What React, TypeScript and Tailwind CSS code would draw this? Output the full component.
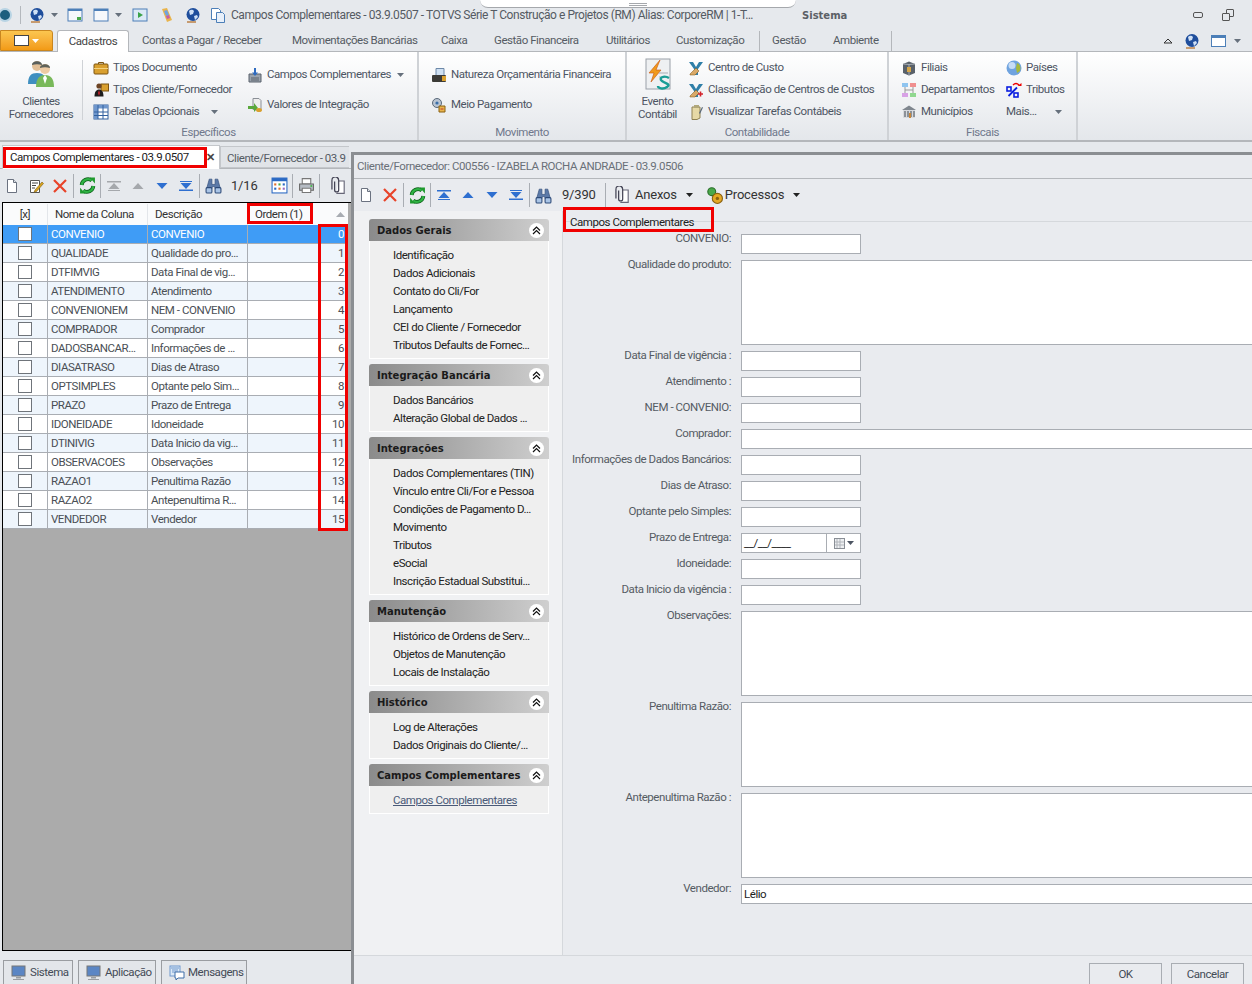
import type { ReactNode } from 'react'

const Svg = ({ s = 16, children }: { s?: number; children: ReactNode }) => (
  <svg width={s} height={s} viewBox="0 0 16 16" className="shrink-0">
    {children}
  </svg>
)

/* toolbar icons */
const DocIcon = () => (
  <Svg>
    <path d="M3.5 1.5h6l3 3v10h-9z" fill="#fff" stroke="#6b7280" />
    <path d="M9.5 1.5v3h3" fill="#dfe3e8" stroke="#6b7280" />
  </Svg>
)
const EditIcon = () => (
  <Svg>
    <path d="M2.5 2.5h9v12h-9z" fill="#fff" stroke="#555" />
    <path d="M4 5h6M4 7.5h4M4 10h3" stroke="#444" />
    <path d="M7 12l7-8 1.5 1.5-7 8-2.5 .8z" fill="#d9a520" stroke="#7c5a10" strokeWidth=".6" />
  </Svg>
)
const XIcon = () => (
  <Svg>
    <path d="M2 2l12 12M14 2L2 14" stroke="#e8442a" strokeWidth="2.2" />
  </Svg>
)
const RefreshIcon = () => (
  <Svg s={17}>
    <path d="M2.5 7.5A6 6 0 0 1 12 3.2" fill="none" stroke="#0b5d17" strokeWidth="3.6" />
    <path d="M13.5 8.5A6 6 0 0 1 4 12.8" fill="none" stroke="#0b5d17" strokeWidth="3.6" />
    <path d="M2.5 7.5A6 6 0 0 1 12 3.2" fill="none" stroke="#2fb344" strokeWidth="2.2" />
    <path d="M13.5 8.5A6 6 0 0 1 4 12.8" fill="none" stroke="#2fb344" strokeWidth="2.2" />
    <path d="M10 0.5h5v5.5z" fill="#1f9a2e" />
    <path d="M6 15.5H1V10z" fill="#1f9a2e" />
  </Svg>
)
const Nav = ({ d, c, bar }: { d: 'up' | 'down'; c: string; bar?: boolean }) => (
  <Svg>
    {d === 'up' ? (
      <>
        {bar && <path d="M1 3h14v1.6H1zM2 12h12v1H2z" fill={c} />}
        <path d="M8 5l5.5 6h-11z" fill={c} />
      </>
    ) : (
      <>
        {bar && <path d="M1 11.5h14V13H1zM2 3h12v1H2z" fill={c} />}
        <path d="M8 11L2.5 5h11z" fill={c} />
      </>
    )}
  </Svg>
)
const Binoculars = () => (
  <Svg s={17}>
    <path d="M4 2h2.5v5h3V2H12l2.5 9h-5L9 9H7l-.5 2h-5z" fill="#5c7aa8" stroke="#2d4a78" strokeWidth=".6" />
    <rect x="1" y="10" width="5.5" height="5" rx="1" fill="#a9c4e6" stroke="#2d4a78" />
    <rect x="9.5" y="10" width="5.5" height="5" rx="1" fill="#a9c4e6" stroke="#2d4a78" />
  </Svg>
)
const GridIcon = () => (
  <Svg s={17}>
    <rect x="1" y="1" width="14" height="14" fill="#fff" stroke="#2a69c4" />
    <path d="M1 1h14v3H1z" fill="#2a69c4" />
    <path d="M3 6h2v2H3z" fill="#e0702c" />
    <path d="M7 6h2v2H7z" fill="#4aa84a" />
    <path d="M11 6h2v2h-2z" fill="#2a69c4" />
    <path d="M3 10h2v2H3z" fill="#2a69c4" />
    <path d="M7 10h2v2H7z" fill="#e0702c" />
    <path d="M11 10h2v2h-2z" fill="#9a6ac0" />
  </Svg>
)
const PrinterIcon = () => (
  <Svg s={17}>
    <path d="M4 1.5h8v5H4z" fill="#fff" stroke="#777" />
    <path d="M1.5 6.5h13v6h-13z" fill="#b6bcc4" stroke="#666" />
    <path d="M4 10.5h8v4H4z" fill="#fff" stroke="#777" />
    <circle cx="12.5" cy="8.5" r="1" fill="#43b649" />
  </Svg>
)
const ClipIcon = () => (
  <Svg s={18}>
    <path d="M8.5 3.5h5v11h-7" fill="#fff" stroke="#667" />
    <path d="M5 4v7.5a1.8 1.8 0 0 0 3.6 0V3a3 3 0 0 0-6 0v8" fill="none" stroke="#445" strokeWidth="1.1" />
  </Svg>
)
const CogsIcon = () => (
  <Svg s={18}>
    <circle cx="6" cy="5" r="3.5" fill="#4aa84a" stroke="#2a6e2a" />
    <circle cx="11" cy="11" r="4.5" fill="#e5a823" stroke="#8a6110" />
    <circle cx="11" cy="11" r="1.5" fill="#8a6110" />
  </Svg>
)

/* ribbon icons */
const Briefcase = () => (
  <Svg>
    <path d="M5.5 4V2.5h5V4" fill="none" stroke="#7c5512" />
    <rect x="1" y="4" width="14" height="10" rx="1" fill="#d9a02f" stroke="#7c5512" />
    <path d="M1 8.5h14" stroke="#f4d27e" />
  </Svg>
)
const PersonCase = () => (
  <Svg>
    <rect x="8" y="2" width="7.5" height="7" fill="#d9a02f" stroke="#7c5512" />
    <circle cx="6" cy="4" r="2.6" fill="#6d4424" />
    <path d="M1.5 14.5c0-5 2-7 4.5-7s4.5 2 4.5 7z" fill="#1c1c1c" />
    <path d="M6 8l-1 3 1 3 1-3z" fill="#c8232c" />
  </Svg>
)
const TableIcon = () => (
  <Svg>
    <rect x="1" y="1" width="14" height="14" fill="#fff" stroke="#32609e" />
    <path d="M1 1h14v3.5H1zM1 4.5h4v10.5H1z" fill="#6f97cd" />
    <path d="M1 8h14M1 11.5h14M5 1v14M10 1v14" stroke="#32609e" />
  </Svg>
)
const Campos = () => (
  <Svg>
    <path d="M2 7h12v8H2z" fill="#9aa3ad" stroke="#5a626c" />
    <path d="M8 1v7" stroke="#2e6bc0" strokeWidth="2" />
    <path d="M5 5.5h6L8 9z" fill="#2e6bc0" />
    <path d="M4 11h8M4 13h8" stroke="#5a626c" />
  </Svg>
)
const Valores = () => (
  <Svg>
    <path d="M6 1.5h6l2 2v9H6z" fill="#eee" stroke="#8a8f96" />
    <path d="M1 9h6V6l4 5-4 4v-3H1z" fill="#5aa83c" />
    <ellipse cx="12" cy="13" rx="3" ry="2" fill="#d9a02f" />
  </Svg>
)
const Natureza = () => (
  <Svg>
    <path d="M5 1.5h8v7H5z" fill="#cfe0f2" stroke="#6d88a8" />
    <rect x="1" y="8" width="14" height="7" rx="1" fill="#3b3a36" />
    <rect x="11" y="9" width="4" height="5" fill="#d9a02f" />
  </Svg>
)
const Meio = () => (
  <Svg>
    <circle cx="6" cy="6" r="4.5" fill="#b9c4d2" stroke="#5a6878" />
    <circle cx="6" cy="6" r="1.6" fill="#3a6ea8" />
    <path d="M8 9h6v6H8z" fill="#e9b44c" stroke="#8a6110" />
    <path d="M9.5 12h3" stroke="#c0392b" />
  </Svg>
)
const Centro = ({ red }: { red?: boolean }) => (
  <Svg>
    <path d="M1 2h4l3 5 3-5h4l-5 7v6H6V9z" fill="#2f7fa8" />
    <path d="M2 14l6-6 3 3-4 4H2z" fill="#d9a968" stroke="#7c5512" strokeWidth=".5" />
    {red && <path d="M10 12h5M12.5 9.5v5" stroke="#d3222a" strokeWidth="1.6" />}
  </Svg>
)
const Tarefas = () => (
  <Svg>
    <path d="M4 3h8v11l-3 1.5H4z" fill="#e6d9a6" stroke="#8f8152" />
    <path d="M6 1h5v3H6z" fill="#b0a77a" />
    <path d="M11 9l3-6 1 .6-3 6.4z" fill="#5a6878" />
  </Svg>
)
const Filiais = () => (
  <Svg>
    <path d="M2 4l6-2.5L14 4v9l-6 2.5L2 13z" fill="#59616a" />
    <path d="M8 4.5l-6-.5M8 4.5L14 4M8 4.5v11" stroke="#a8aeb5" />
    <rect x="6" y="7" width="4" height="5" fill="#d5a64a" />
  </Svg>
)
const Dept = () => (
  <Svg>
    <rect x="1" y="1" width="6" height="4" fill="#8fc5f0" />
    <rect x="9" y="1" width="6" height="4" fill="#f08f8f" />
    <rect x="1" y="11" width="6" height="4" fill="#d8a2e6" />
    <rect x="9" y="11" width="6" height="4" fill="#90d890" />
    <path d="M4 5v6M12 5v6M4 8h8" stroke="#999" />
  </Svg>
)
const Municipio = () => (
  <Svg>
    <path d="M1 6l7-4.5L15 6z" fill="#7f868e" />
    <path d="M2 6h12v8H2z" fill="#d8dade" />
    <path d="M4 7v6M7 7v6M10 7v6M13 7v6" stroke="#6d747c" strokeWidth="1.4" />
    <path d="M8 9h2v5H8z" fill="#c8873a" />
  </Svg>
)
const Globe = () => (
  <Svg>
    <circle cx="8" cy="8" r="7.5" fill="#6fa3df" />
    <circle cx="6" cy="5.5" r="3.5" fill="#c6dcf5" />
    <path d="M11 3c3 1 4 4 3 8l-3 2-1-5z" fill="#a6b83c" />
  </Svg>
)
const Percent = () => (
  <Svg>
    <path d="M2.5 14L11 5.5" stroke="#0a1fe0" strokeWidth="1.8" />
    <rect x="1" y="5" width="4" height="4" fill="none" stroke="#0a1fe0" strokeWidth="1.6" />
    <rect x="8" y="11" width="4" height="4" fill="none" stroke="#0a1fe0" strokeWidth="1.6" />
    <path d="M7 3c2-2 4-2 6 0" fill="none" stroke="#e00" strokeWidth="1.4" />
    <path d="M11.5 4h4V1z" fill="#e00" />
  </Svg>
)
const Net = ({ s = 16 }: { s?: number }) => (
  <Svg s={s}>
    <circle cx="8" cy="7.5" r="6.5" fill="#1f4e9c" />
    <path d="M4 4c2-2 4-1 5 0l-1 3-3 1zM9 9l3-1 1 2-3 3z" fill="#cfe0f5" />
    <path d="M2 15h9" stroke="#b87a3a" strokeWidth="1.4" />
  </Svg>
)
const Caret = ({ c = '#66707c' }: { c?: string }) => (
  <svg width="7" height="4" viewBox="0 0 7 4" className="shrink-0">
    <path d="M0 0h7L3.5 4z" fill={c} />
  </svg>
)
const People = () => (
  <svg width="30" height="30" viewBox="0 0 30 30">
    <circle cx="11" cy="8" r="5" fill="#e2bf97" />
    <path d="M6 7c0-5 10-5 10 0-3-1-7-1-10 0z" fill="#595f5c" />
    <path d="M2 26c0-8 3-11 9-11s9 3 9 11z" fill="#3f8fc0" />
    <circle cx="19" cy="11" r="5" fill="#eecba4" />
    <path d="M14 10c0-5 10-5 10 0-3-1-7-1-10 0z" fill="#5f625a" />
    <path d="M10 29c0-8 3-12 9-12s9 4 9 12z" fill="#79b95a" />
    <path d="M19 17l-2 3 2 6 2-6z" fill="#fff" />
  </svg>
)
const Evento = () => (
  <svg width="30" height="34" viewBox="0 0 30 34">
    <rect x="3" y="1" width="24" height="30" fill="#eef0f2" stroke="#9aa0a8" />
    <path d="M17 2L6 15h5l-3 9 10-12h-5z" fill="#f09a1c" stroke="#c9540f" strokeWidth=".6" />
    <path d="M16 15h9M16 19h9" stroke="#a8aeb5" />
    <path d="M26 20c-5-3-11 0-7 3s9 3 5 6-9 1-9-1" fill="none" stroke="#1a9d95" strokeWidth="2.4" />
  </svg>
)

const Row = ({ icon, text, caret, w }: { icon?: ReactNode; text: string; caret?: boolean; w?: string }) => (
  <div className={`flex items-center h-[22px] ${w ?? ''}`}>
    {icon && <span className="w-[20px] flex items-center shrink-0">{icon}</span>}
    <span className="whitespace-nowrap">{text}</span>
    {caret && (
      <span className="ml-auto">
        <Caret />
      </span>
    )}
  </div>
)

const Group = ({ w, label, children }: { w: string; label: string; children: ReactNode }) => (
  <div className={`${w} shrink-0 h-full flex flex-col border-r-2 border-[#cfd2d6]`}>
    <div className="flex-1 min-h-0 flex">{children}</div>
    <div className="h-[17px] leading-[19px] text-center text-[#70788c]">{label}</div>
  </div>
)

const tabs: [string, string][] = [
  ['Contas a Pagar / Receber', 'w-[150px]'],
  ['Movimentações Bancárias', 'w-[149px]'],
  ['Caixa', 'w-[53px]'],
  ['Gestão Financeira', 'w-[112px]'],
  ['Utilitários', 'w-[70px]'],
  ['Customização', 'w-[95px]'],
]

function TopBar() {
  return (
    <div className="h-[30px] flex items-center relative text-[#555b63]">
      <div className="w-[14px] h-[14px] rounded-full bg-[#1d5f7e] border-2 border-[#b8d4e4] -ml-[2px]" />
      <div className="w-px h-[18px] bg-[#b4b8bd] ml-[8px]" />
      <span className="ml-[8px]"><Net /></span>
      <span className="ml-[6px]"><Caret /></span>
      <span className="ml-[9px]"><Svg><rect x="1" y="2" width="14" height="12" fill="#f6f8fb" stroke="#4c7fb8" /><path d="M1 2h14v2H1z" fill="#4c7fb8" /><path d="M10 10h4v3h-4z" fill="#4aa84a" /></Svg></span>
      <span className="ml-[10px]"><Svg><rect x="1" y="2" width="14" height="12" fill="#f6f8fb" stroke="#4c7fb8" /><path d="M1 2h14v2H1z" fill="#4c7fb8" /></Svg></span>
      <span className="ml-[6px]"><Caret /></span>
      <span className="ml-[10px]"><Svg><rect x="1" y="2" width="14" height="12" fill="#dbe9f6" stroke="#4c7fb8" /><path d="M6 5l5 3-5 3z" fill="#3aa34a" /></Svg></span>
      <span className="ml-[11px]"><Svg><path d="M3 2l5-1 5 12-5 2z" fill="#e9b44c" /><path d="M5 4l3-1 2 5-3 1z" fill="#6fa3df" /><path d="M7 9l3-1 1 3-3 1z" fill="#c75ca8" /></Svg></span>
      <span className="ml-[10px]"><Net /></span>
      <span className="ml-[9px]"><Svg><path d="M1.5 1.5h7l2 2v9h-9z" fill="#fff" stroke="#4c7fb8" /><path d="M6.5 5.5h6l2 2v8h-8z" fill="#e8f0fa" stroke="#4c7fb8" /></Svg></span>
      <span className="ml-[5px] w-[571px] shrink-0 whitespace-nowrap text-[12px]">Campos Complementares - 03.9.0507 - TOTVS Série T Construção e Projetos (RM) Alias: CorporeRM | 1-T…</span>
      <span className="font-['DejaVu_Sans'] font-bold text-[10px] tracking-normal text-[#5c6066]">Sistema</span>
      <div className="ml-auto flex items-center gap-[19px] pr-[18px]">
        <span className="w-[10px] h-[6px] rounded-[2px] border border-[#555]" />
        <span className="relative w-[12px] h-[12px]">
          <span className="absolute right-0 top-0 w-[8px] h-[8px] border border-[#555] rounded-[1px]" />
          <span className="absolute left-0 bottom-0 w-[8px] h-[8px] border border-[#555] rounded-[1px] bg-[#e6e9ed]" />
        </span>
      </div>
      {/* grip notch over the title bar */}
      <div className="absolute left-[480px] top-0 w-[316px] h-[8px] bg-white border-b border-[#a5a8ac] rounded-b-[10px] flex flex-col items-center gap-[1px] pt-[3px]">
        <span className="w-[18px] h-px bg-[#a5a8ac]" />
        <span className="w-[18px] h-px bg-[#a5a8ac]" />
      </div>
    </div>
  )
}

function TabBar() {
  return (
    <div className="h-[22px] flex items-end text-[#555b63] border-b border-[#b4b7bb]">
      <div className="w-[53px] h-[21px] bg-gradient-to-b from-[#fbc64f] to-[#f29a13] border border-[#c9861f] rounded-tr-[3px] flex items-center justify-center gap-[3px]">
        <span className="w-[15px] h-[11px] border border-[#444] bg-white" />
        <Caret c="#fff" />
      </div>
      <div className="ml-[4px] w-[72px] h-[22px] -mb-px bg-white border border-b-0 border-[#b4b7bb] rounded-t-[3px] flex items-center justify-center text-[#444]">
        Cadastros
      </div>
      <div className="w-[13px]" />
      {tabs.map(([t, w]) => (
        <div key={t} className={`${w} h-full pt-px flex items-center whitespace-nowrap`}>{t}</div>
      ))}
      <div className="w-px h-[20px] bg-[#b4b7bb] self-center -ml-[12px] mr-[12px]" />
      <div className="w-[61px] h-full pt-px flex items-center">Gestão</div>
      <div className="w-[58px] h-full pt-px flex items-center whitespace-nowrap">Ambiente</div>
      <div className="w-px h-[20px] bg-[#b4b7bb] self-center" />
      <div className="ml-auto flex items-center gap-[11px] pr-[11px] h-full">
        <svg width="10" height="7" viewBox="0 0 10 7"><path d="M1 6l4-4 4 4-4 0z" fill="none" stroke="#333" /></svg>
        <Net />
        <span className="flex items-center gap-[8px]">
          <span className="w-[15px] h-[12px] border border-[#4c7fb8] bg-white border-t-[3px]" />
          <Caret />
        </span>
      </div>
    </div>
  )
}

function Ribbon() {
  return (
    <div className="h-[90px] flex text-[#4d5563] bg-gradient-to-b from-white to-[#e4e7eb] border-b-2 border-[#b4b7bb]">
      <Group w="w-[419px]" label="Específicos">
        <div className="w-[82px] shrink-0 flex flex-col items-center pt-[6px] leading-[13px]">
          <People />
          <div className="mt-[7px] text-center">Clientes<br />Fornecedores</div>
        </div>
        <div className="w-px h-[60px] mt-[8px] bg-[#cfd2d6] shrink-0" />
        <div className="w-[154px] shrink-0 pl-[10px] pt-[5px]">
          <Row icon={<Briefcase />} text="Tipos Documento" />
          <Row icon={<PersonCase />} text="Tipos Cliente/Fornecedor" />
          <Row icon={<TableIcon />} text="Tabelas Opcionais" caret w="w-[125px]" />
        </div>
        <div className="flex-1 pl-[10px] pr-[13px] pt-[12px] flex flex-col gap-[8px]">
          <Row icon={<Campos />} text="Campos Complementares" caret />
          <Row icon={<Valores />} text="Valores de Integração" />
        </div>
      </Group>
      <Group w="w-[208px]" label="Movimento">
        <div className="pl-[12px] pt-[12px] flex flex-col gap-[8px]">
          <Row icon={<Natureza />} text="Natureza Orçamentária Financeira" />
          <Row icon={<Meio />} text="Meio Pagamento" />
        </div>
      </Group>
      <Group w="w-[262px]" label="Contabilidade">
        <div className="w-[61px] shrink-0 flex flex-col items-center pt-[6px] leading-[13px]">
          <Evento />
          <div className="mt-[3px] text-center">Evento<br />Contábil</div>
        </div>
        <div className="pt-[5px]">
          <Row icon={<Centro />} text="Centro de Custo" />
          <Row icon={<Centro red />} text="Classificação de Centros de Custos" />
          <Row icon={<Tarefas />} text="Visualizar Tarefas Contábeis" />
        </div>
      </Group>
      <Group w="w-[189px]" label="Fiscais">
        <div className="w-[117px] shrink-0 pl-[12px] pt-[5px]">
          <Row icon={<Filiais />} text="Filiais" />
          <Row icon={<Dept />} text="Departamentos" />
          <Row icon={<Municipio />} text="Municípios" />
        </div>
        <div className="flex-1 pt-[5px]">
          <Row icon={<Globe />} text="Países" />
          <Row icon={<Percent />} text="Tributos" />
          <Row text="Mais…" caret w="w-[56px]" />
        </div>
      </Group>
    </div>
  )
}

const Cell = ({ w, children }: { w: string; children: ReactNode }) => (
  <div className={`${w} h-[24px] shrink-0 flex items-center justify-center`}>{children}</div>
)
const Sep = () => <div className="w-px h-[24px] mx-px bg-[#a9adb3] shrink-0" />

const rows: [string, string][] = [
  ['CONVENIO', 'CONVENIO'],
  ['QUALIDADE', 'Qualidade do pro…'],
  ['DTFIMVIG', 'Data Final de vig…'],
  ['ATENDIMENTO', 'Atendimento'],
  ['CONVENIONEM', 'NEM - CONVENIO'],
  ['COMPRADOR', 'Comprador'],
  ['DADOSBANCAR…', 'Informações de …'],
  ['DIASATRASO', 'Dias de Atraso'],
  ['OPTSIMPLES', 'Optante pelo Sim…'],
  ['PRAZO', 'Prazo de Entrega'],
  ['IDONEIDADE', 'Idoneidade'],
  ['DTINIVIG', 'Data Inicio da vig…'],
  ['OBSERVACOES', 'Observações'],
  ['RAZAO1', 'Penultima Razão'],
  ['RAZAO2', 'Antepenultima R…'],
  ['VENDEDOR', 'Vendedor'],
]

function ColumnsGrid() {
  return (
    <div className="flex-1 min-h-0 ml-[2px] bg-[#ababab] border-l border-t border-b border-black">
      <div className="w-[345px] h-[22px] pt-px flex bg-[#fafbfc] text-[#333] relative">
        <div className="w-[45px] flex items-center justify-center border-r border-[#e3e6ea]">[x]</div>
        <div className="w-[100px] flex items-center pl-[7px] border-r border-[#e3e6ea]">Nome da Coluna</div>
        <div className="w-[100px] flex items-center pl-[7px] border-r border-[#e3e6ea]">Descrição</div>
        <div className="flex-1 flex items-center pl-[7px]">Ordem (1)</div>
        <svg width="9" height="5" viewBox="0 0 9 5" className="absolute right-[3px] top-[9px]"><path d="M0 5h9L4.5 0z" fill="#a8acb2" /></svg>
        <div className="absolute left-[244px] top-0 w-[66px] h-[21px] border-[3px] border-[#f00000]" />
      </div>
      <div className="w-[345px] relative">
        {rows.map(([a, b], i) => (
          <div
            key={a}
            className={`h-[19px] flex border-b border-[#a9adb3] ${
              i === 0 ? 'bg-[#3f9cf6] text-white' : i % 2 ? 'bg-[#eef5fc] text-[#4a4f55]' : 'bg-white text-[#4a4f55]'
            }`}
          >
            <div className="w-[45px] flex items-center justify-center border-r border-[#a9adb3]">
              <span className="w-[14px] h-[14px] bg-white border border-[#6f747a]" />
            </div>
            <div className="w-[100px] pl-[3px] leading-[18px] border-r border-[#a9adb3] whitespace-nowrap">{a}</div>
            <div className="w-[100px] pl-[3px] leading-[18px] border-r border-[#a9adb3] whitespace-nowrap">{b}</div>
            <div className="flex-1 pr-[4px] leading-[18px] text-right">{i}</div>
          </div>
        ))}
        <div className="absolute right-0 -top-[1px] w-[30px] bottom-[-2px] border-[3px] border-[#f00000]" />
      </div>
    </div>
  )
}

const StatusBtn = ({ w, icon, text }: { w: string; icon: ReactNode; text: string }) => (
  <div className={`${w} h-[24px] bg-[#e3e6ea] border border-b-0 border-[#9a9da1] flex items-center gap-[3px] pl-[7px] text-[#444b56]`}>
    {icon}
    {text}
  </div>
)
const Monitor = () => (
  <Svg>
    <rect x="1" y="1" width="13" height="10" fill="#5b86c4" stroke="#777" />
    <path d="M5 12h5v1.5H5zM2 14h11v1H2z" fill="#9a9da1" />
  </Svg>
)
const Messages = () => (
  <Svg>
    <rect x="1" y="1" width="10" height="10" fill="#dbe9f6" stroke="#6f97cd" />
    <path d="M2 3h8M3 5h6M3 7h6" stroke="#6f97cd" />
    <path d="M6 7h9v6H9l-2 2v-2H6z" fill="#fff" stroke="#3f6fa8" />
  </Svg>
)

function LeftPanel() {
  return (
    <div className="w-[351px] shrink-0 h-full flex flex-col overflow-hidden pt-[3px]">
      <div className="h-[24px] flex items-end border-b border-[#b4b7bb] shrink-0 relative">
        <div className="ml-[2px] w-[218px] h-[24px] -mb-px bg-white border border-b-0 border-[#c4c7cb] flex items-center relative shrink-0">
          <span className="ml-[7px] text-[#222] whitespace-nowrap">Campos Complementares - 03.9.0507</span>
          <span className="ml-auto mr-[4px] text-[#444] text-[11px] font-bold leading-none">✕</span>
          <div className="absolute left-0 top-px w-[204px] h-[21px] border-[3px] border-[#f00000]" />
        </div>
        <div className="w-[129px] h-[22px] pt-[3px] shrink-0 bg-[#e1e4e8] border border-r-0 border-[#c4c7cb] flex items-center pl-[6px] text-[#555b63] whitespace-nowrap">
          Cliente/Fornecedor - 03.9
        </div>
      </div>
      <div className="h-[33px] shrink-0 flex items-center">
        <Cell w="w-[24px]"><DocIcon /></Cell>
        <Cell w="w-[24px]"><EditIcon /></Cell>
        <Cell w="w-[24px]"><XIcon /></Cell>
        <Sep />
        <Cell w="w-[24px]"><RefreshIcon /></Cell>
        <Sep />
        <Cell w="w-[24px]"><Nav d="up" c="#a5a8ac" bar /></Cell>
        <Cell w="w-[24px]"><Nav d="up" c="#a5a8ac" /></Cell>
        <Cell w="w-[24px]"><Nav d="down" c="#2e6fd0" /></Cell>
        <Cell w="w-[24px]"><Nav d="down" c="#2e6fd0" bar /></Cell>
        <Sep />
        <Cell w="w-[24px]"><Binoculars /></Cell>
        <span className="ml-[6px] w-[36px] text-[13px] tracking-[-0.2px] text-[#333]">1/16</span>
        <Cell w="w-[24px]"><GridIcon /></Cell>
        <Sep />
        <Cell w="w-[24px]"><PrinterIcon /></Cell>
        <Sep />
        <span className="ml-[5px]"><Cell w="w-[24px]"><ClipIcon /></Cell></span>
      </div>
      <ColumnsGrid />
      <div className="h-[33px] shrink-0 flex items-end gap-[5px] pl-[3px]">
        <StatusBtn w="w-[70px]" icon={<Monitor />} text="Sistema" />
        <StatusBtn w="w-[78px]" icon={<Monitor />} text="Aplicação" />
        <StatusBtn w="w-[86px]" icon={<Messages />} text="Mensagens" />
      </div>
    </div>
  )
}

const navGroups: [string, string[]][] = [
  ['Dados Gerais', ['Identificação', 'Dados Adicionais', 'Contato do Cli/For', 'Lançamento', 'CEI do Cliente / Fornecedor', 'Tributos Defaults de Fornec…']],
  ['Integração Bancária', ['Dados Bancários', 'Alteração Global de Dados …']],
  ['Integrações', ['Dados Complementares (TIN)', 'Vínculo entre Cli/For e Pessoa', 'Condições de Pagamento D…', 'Movimento', 'Tributos', 'eSocial', 'Inscrição Estadual Substitui…']],
  ['Manutenção', ['Histórico de Ordens de Serv…', 'Objetos de Manutenção', 'Locais de Instalação']],
  ['Histórico', ['Log de Alterações', 'Dados Originais do Cliente/…']],
  ['Campos Complementares', ['Campos Complementares']],
]

function NavPanel() {
  return (
    <div className="w-[208px] shrink-0 h-full bg-[#f0f1f3] pl-[15px] pt-[8px] flex flex-col gap-[5px]">
      {navGroups.map(([title, items]) => (
        <div key={title} className="w-[180px]">
          <div className="h-[22px] rounded-t-[3px] bg-gradient-to-r from-[#8b8b8b] to-[#cfcfcf] flex items-center pl-[8px] font-['DejaVu_Sans'] font-bold text-[10px] tracking-normal text-[#1a1a1a]">
            <span className="whitespace-nowrap">{title}</span>
            <span className="ml-auto mr-[5px] w-[15px] h-[15px] rounded-full bg-white flex items-center justify-center shrink-0">
              <svg width="9" height="9" viewBox="0 0 9 9"><path d="M1 4.5l3.5-3.5L8 4.5M1 8l3.5-3.5L8 8" fill="none" stroke="#111" strokeWidth="1.2" /></svg>
            </span>
          </div>
          <div className="bg-[#efefef] border-x border-b border-white pt-[5px] pb-[4px] pl-[23px] text-[#222]">
            {items.map(t => (
              <div key={t} className={`h-[18px] leading-[18px] whitespace-nowrap ${title === 'Campos Complementares' ? 'underline text-[#4a5a78]' : ''}`}>{t}</div>
            ))}
          </div>
        </div>
      ))}
    </div>
  )
}

const fields: [string, 'short' | 'tall' | 'wide' | 'date', string?][] = [
  ['CONVENIO:', 'short'],
  ['Qualidade do produto:', 'tall'],
  ['Data Final de vigência :', 'short'],
  ['Atendimento :', 'short'],
  ['NEM - CONVENIO:', 'short'],
  ['Comprador:', 'wide'],
  ['Informações de Dados Bancários:', 'short'],
  ['Dias de Atraso:', 'short'],
  ['Optante pelo Simples:', 'short'],
  ['Prazo de Entrega:', 'date'],
  ['Idoneidade:', 'short'],
  ['Data Inicio da vigência :', 'short'],
  ['Observações:', 'tall'],
  ['Penultima Razão:', 'tall'],
  ['Antepenultima Razão :', 'tall'],
  ['Vendedor:', 'wide', 'Lélio'],
]

function Field({ kind, value }: { kind: 'short' | 'tall' | 'wide' | 'date'; value?: string }) {
  if (kind === 'date') {
    return (
      <div className="w-[120px] h-[20px] bg-white border border-[#a9adb3] flex">
        <div className="w-[85px] pl-[2px] leading-[18px] border-r border-[#a9adb3] text-[#222]">__/__/____</div>
        <div className="flex-1 flex items-center justify-center gap-[2px]">
          <svg width="11" height="11" viewBox="0 0 11 11"><rect x=".5" y=".5" width="10" height="10" fill="#eef0f2" stroke="#8a8f96" /><path d="M3 1v9M6 1v9M1 4h9M1 7h9" stroke="#b0b4ba" /></svg>
          <Caret c="#4d5563" />
        </div>
      </div>
    )
  }
  const size = kind === 'short' ? 'w-[120px] h-[20px]' : kind === 'tall' ? 'w-full h-[85px]' : 'w-full h-[20px]'
  return <div className={`${size} bg-white border border-[#a9adb3] pl-[2px] leading-[18px] text-[#222]`}>{value}</div>
}

function FormPanel() {
  return (
    <div className="flex-1 min-w-0 h-full border-l border-[#d5d8dc] flex flex-col relative">
      <div className="h-[23px] shrink-0 relative">
        <div className="absolute left-0 right-0 top-[10px] h-px bg-[#d5d8dc]" />
        <span className="absolute left-[7px] top-[4px] bg-[#e9ebef] text-[#222] whitespace-nowrap leading-[14px]">Campos Complementares</span>
        <div className="absolute left-0 -top-[4px] w-[151px] h-[25px] border-[3px] border-[#f00000]" />
      </div>
      <div className="flex flex-col gap-[6px] text-[#555b63]">
        {fields.map(([label, kind, value]) => (
          <div key={label} className="flex">
            <div className="w-[168px] shrink-0 text-right leading-[13px] -mt-[2px] whitespace-nowrap">{label}</div>
            <div className="ml-[10px] flex-1 min-w-0 -mr-[2px]">
              <Field kind={kind} value={value} />
            </div>
          </div>
        ))}
      </div>
    </div>
  )
}

function Dialog() {
  return (
    <div className="flex-1 min-w-0 mt-[10px] h-[832px] border-l-[3px] border-t-[3px] border-[#8b8e92] flex flex-col bg-[#e9ebef] overflow-hidden">
      <div className="h-[24px] shrink-0 pl-[3px] pt-[1px] leading-[20px] text-[#6a7078] border-b border-[#b4b7bb] whitespace-nowrap">
        Cliente/Fornecedor: C00556 - IZABELA ROCHA ANDRADE - 03.9.0506
      </div>
      <div className="h-[32px] shrink-0 flex items-center">
        <Cell w="w-[24px]"><DocIcon /></Cell>
        <Cell w="w-[24px]"><XIcon /></Cell>
        <Sep />
        <Cell w="w-[24px]"><RefreshIcon /></Cell>
        <Sep />
        <Cell w="w-[24px]"><Nav d="up" c="#2e6fd0" bar /></Cell>
        <Cell w="w-[24px]"><Nav d="up" c="#2e6fd0" /></Cell>
        <Cell w="w-[24px]"><Nav d="down" c="#2e6fd0" /></Cell>
        <Cell w="w-[24px]"><Nav d="down" c="#2e6fd0" bar /></Cell>
        <Sep />
        <Cell w="w-[24px]"><Binoculars /></Cell>
        <span className="ml-[7px] w-[42px] text-[13px] tracking-[-0.2px] text-[#333]">9/390</span>
        <Sep />
        <span className="ml-[6px]"><ClipIcon /></span>
        <span className="ml-[4px] text-[13px] tracking-[-0.2px] text-[#333]">Anexos</span>
        <span className="ml-[9px]"><Caret c="#222" /></span>
        <span className="ml-[12px]"><CogsIcon /></span>
        <span className="ml-[2px] text-[13px] tracking-[-0.2px] text-[#333]">Processos</span>
        <span className="ml-[9px]"><Caret c="#222" /></span>
      </div>
      <div className="flex-1 min-h-0 flex">
        <NavPanel />
        <FormPanel />
      </div>
      <div className="h-[29px] shrink-0 border-t border-[#d5d8dc] flex justify-end items-end gap-[9px] pr-[8px] text-[#444b56]">
        <div className="w-[73px] h-[21px] bg-[#e9ebef] border border-b-0 border-[#a9adb3] text-center leading-[20px]">OK</div>
        <div className="w-[73px] h-[21px] bg-[#e9ebef] border border-b-0 border-[#a9adb3] text-center leading-[20px]">Cancelar</div>
      </div>
    </div>
  )
}

export default function App() {
  return (
    <div className="w-[1252px] h-[984px] overflow-hidden flex flex-col bg-[#e6e9ed] font-['Roboto',sans-serif] text-[11.5px] tracking-[-0.45px]">
      <TopBar />
      <TabBar />
      <Ribbon />
      <div className="flex-1 min-h-0 flex">
        <LeftPanel />
        <Dialog />
      </div>
    </div>
  )
}
